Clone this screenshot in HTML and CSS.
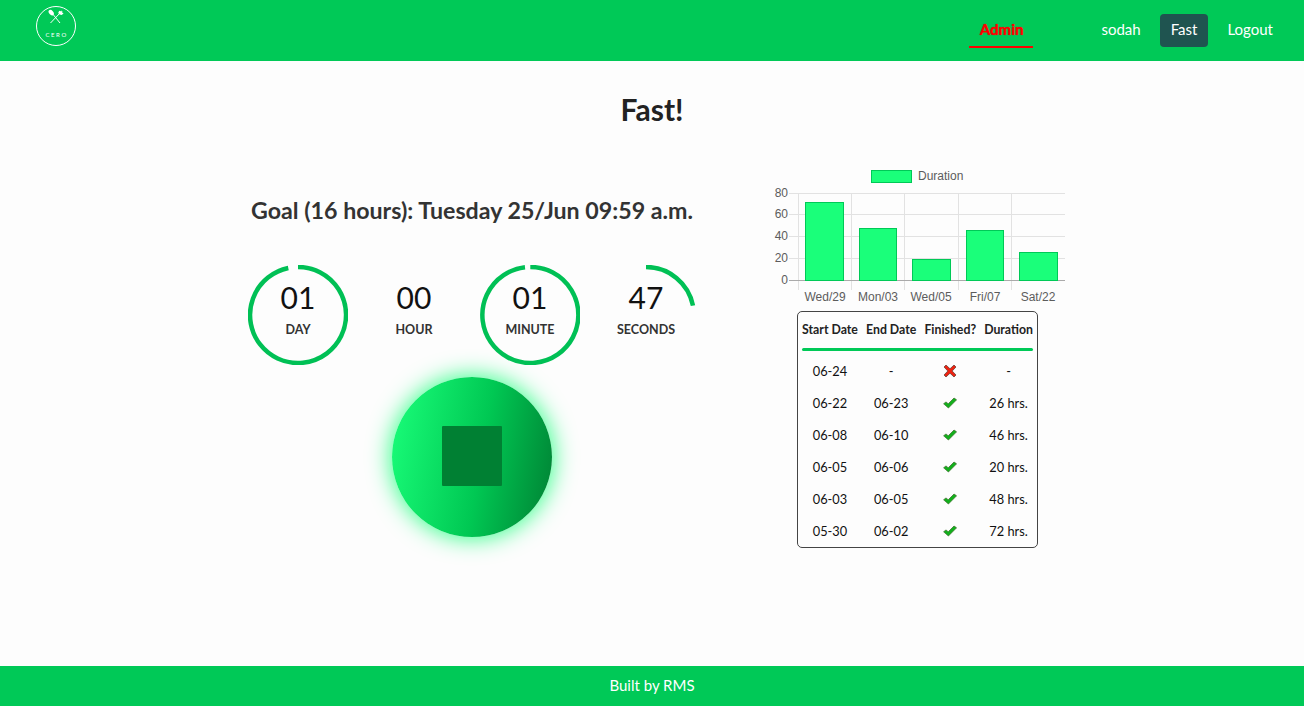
FILE: index.html
```html
<!DOCTYPE html>
<html>
<head>
    <meta charset="UTF-8">
    <title>Fast!</title>
    <link rel="stylesheet" href="styles.css">
</head>
<body>
<header class="topbar">
    <a class="logo" href="#">
        <svg width="42" height="42" viewBox="0 0 42 42">
            <circle cx="21" cy="21" r="19.5" fill="none" stroke="#fff" stroke-width="1"/>
            <path d="M16.5 7.5 L25 18" stroke="#fff" stroke-width="1" fill="none"/>
            <path d="M25.5 7.5 L15.5 18" stroke="#fff" stroke-width="1" fill="none"/>
            <ellipse cx="16.2" cy="7.6" rx="2.1" ry="3.1" fill="#fff" transform="rotate(-42 16.2 7.6)"/>
            <path d="M24.2 5.8 L23.2 8 L24.6 9.6 L26.6 10 L28.6 8.4 L27 7.6 L28 6.8 L26.6 6.6 L26.8 5.4 L25.6 6.2 Z" fill="#fff"/>
            <text class="logo-text" x="21.6" y="31.5" text-anchor="middle">CERO</text>
        </svg>
    </a>
    <nav class="nav">
        <a class="nav-link nav-admin" href="#">Admin</a>
        <a class="nav-link" href="#">sodah</a>
        <a class="nav-link nav-active" href="#">Fast</a>
        <a class="nav-link nav-logout" href="#">Logout</a>
    </nav>
</header>

<main class="content">
    <h1 class="page-title">Fast!</h1>
    <div class="fast-row">
        <section class="timer">
            <h2 class="goal">Goal (16 hours): Tuesday 25/Jun 09:59 a.m.</h2>
            <div class="countdown">
                <div class="unit">
                    <svg class="ring" width="100" height="100" viewBox="0 0 100 100">
                        <path d="M50 2 A48 48 0 1 1 40.3 3" />
                    </svg>
                    <span class="num">01</span>
                    <span class="label">DAY</span>
                </div>
                <div class="unit">
                    <span class="num">00</span>
                    <span class="label">HOUR</span>
                </div>
                <div class="unit">
                    <svg class="ring" width="100" height="100" viewBox="0 0 100 100">
                        <path d="M50.3 2 A48 48 0 1 1 45 2.3" />
                    </svg>
                    <span class="num">01</span>
                    <span class="label">MINUTE</span>
                </div>
                <div class="unit">
                    <svg class="ring" width="100" height="100" viewBox="0 0 100 100">
                        <path d="M50 2 A48 48 0 0 1 97 40.6" />
                    </svg>
                    <span class="num">47</span>
                    <span class="label">SECONDS</span>
                </div>
            </div>
            <button class="stop-btn" type="button"><span class="stop-square"></span></button>
        </section>

        <section class="stats">
            <svg class="chart" width="310" height="148" viewBox="0 0 310 148">
                <rect class="bar" x="111.5" y="10.5" width="40" height="12"/>
                <text class="chart-text" x="158" y="20">Duration</text>
                <g class="grid">
                    <path d="M38.5 33V130M91.5 33V130M144.5 33V130M198.5 33V130M251.5 33V130"/>
                    <path d="M29 33.5H305M29 54.5H305M29 76.5H305M29 98.5H305"/>
                </g>
                <path class="axis" d="M29 120.5H305"/>
                <text class="chart-text" x="28" y="37" text-anchor="end">80</text>
                <text class="chart-text" x="28" y="58" text-anchor="end">60</text>
                <text class="chart-text" x="28" y="80" text-anchor="end">40</text>
                <text class="chart-text" x="28" y="102" text-anchor="end">20</text>
                <text class="chart-text" x="28" y="124" text-anchor="end">0</text>
                <rect class="bar" x="45.5" y="42.5" width="38" height="78"/>
                <rect class="bar" x="99.5" y="68.5" width="37" height="52"/>
                <rect class="bar" x="152.5" y="99.5" width="38" height="21"/>
                <rect class="bar" x="206.5" y="70.5" width="37" height="50"/>
                <rect class="bar" x="259.5" y="92.5" width="38" height="28"/>
                <text class="chart-text" x="65" y="141" text-anchor="middle">Wed/29</text>
                <text class="chart-text" x="118" y="141" text-anchor="middle">Mon/03</text>
                <text class="chart-text" x="171" y="141" text-anchor="middle">Wed/05</text>
                <text class="chart-text" x="225" y="141" text-anchor="middle">Fri/07</text>
                <text class="chart-text" x="278" y="141" text-anchor="middle">Sat/22</text>
            </svg>
            <svg width="0" height="0" class="defs">
                <defs>
                    <symbol id="ok" viewBox="0 0 14 12">
                        <path d="M0.6 6.8 L3 4.9 L5.2 6.8 L11 1 L13.6 2.8 L5.4 11 Z" fill="#12b01c" stroke="#3c6b2a" stroke-width=".7"/>
                    </symbol>
                    <symbol id="no" viewBox="0 0 14 14">
                        <path d="M1 3 L3 1 L7 4.8 L11 1 L13 3 L9.2 7 L13 11 L11 13 L7 9.2 L3 13 L1 11 L4.8 7 Z" fill="#ee2211" stroke="#5a3a30" stroke-width=".7"/>
                    </symbol>
                </defs>
            </svg>
            <table class="history">
                <thead>
                    <tr><th>Start Date</th><th>End Date</th><th>Finished?</th><th>Duration</th></tr>
                    <tr class="rule-row"><td colspan="4"><div class="rule"></div></td></tr>
                </thead>
                <tbody>
                    <tr><td>06-24</td><td>-</td><td><svg class="mark" width="14" height="14"><use href="#no"/></svg></td><td>-</td></tr>
                    <tr><td>06-22</td><td>06-23</td><td><svg class="mark" width="14" height="12"><use href="#ok"/></svg></td><td>26 hrs.</td></tr>
                    <tr><td>06-08</td><td>06-10</td><td><svg class="mark" width="14" height="12"><use href="#ok"/></svg></td><td>46 hrs.</td></tr>
                    <tr><td>06-05</td><td>06-06</td><td><svg class="mark" width="14" height="12"><use href="#ok"/></svg></td><td>20 hrs.</td></tr>
                    <tr><td>06-03</td><td>06-05</td><td><svg class="mark" width="14" height="12"><use href="#ok"/></svg></td><td>48 hrs.</td></tr>
                    <tr><td>05-30</td><td>06-02</td><td><svg class="mark" width="14" height="12"><use href="#ok"/></svg></td><td>72 hrs.</td></tr>
                </tbody>
            </table>
        </section>
    </div>
</main>

<footer class="footer">Built by RMS</footer>
</body>
</html>
```

FILE: styles.css
```css
* {
    margin: 0;
    padding: 0;
    box-sizing: border-box;
}

body {
    height: 706px;
    display: flex;
    flex-direction: column;
    background-color: #fdfdfd;
    color: #222;
    font-family: Lato, "Liberation Sans", sans-serif;
    overflow: hidden;
}

a {
    text-decoration: none;
    color: inherit;
}

/*top bar*/
.topbar {
    height: 61px;
    flex: none;
    display: flex;
    align-items: flex-start;
    justify-content: space-between;
    background-color: #00c957;
    padding: 5px 20px 0 35px;
}

.logo {
    display: block;
    height: 42px;
}

.logo-text {
    font-family: Lato, sans-serif;
    font-size: 6px;
    letter-spacing: 1.6px;
    fill: #fff;
}

.nav {
    display: flex;
    align-items: flex-start;
    margin-top: 9px;
    color: #fff;
    font-size: 15px;
}

.nav-link {
    display: block;
    height: 33px;
    line-height: 31px;
    padding: 0 11px;
    margin-left: 8px;
    border-radius: 4px;
}

.nav-admin {
    height: 34px;
    color: #f00;
    font-weight: 700;
    padding: 0 10px 0 11px;
    border-radius: 0;
    border-bottom: 2px solid #f00;
    text-shadow: 0 0 1px #f00;
    margin-right: 49px;
}

.nav-active {
    background-color: #1f5450;
}

/*main area*/
.content {
    flex: 1;
}

.page-title {
    text-align: center;
    font-size: 30px;
    font-weight: 700;
    line-height: 36px;
    margin-top: 30px;
}

.fast-row {
    display: flex;
    gap: 52px;
    padding-left: 236px;
    margin-top: 28px;
}

.timer {
    width: 472px;
    padding-top: 40px;
}

.goal {
    text-align: center;
    font-size: 23.2px;
    font-weight: 700;
    line-height: 30px;
    color: #333;
}

.countdown {
    display: flex;
    margin-top: 40px;
    padding-left: 12px;
}

.unit {
    position: relative;
    flex: none;
    width: 100px;
    height: 100px;
    margin-right: 16px;
    display: flex;
    flex-direction: column;
    align-items: center;
}

.ring {
    position: absolute;
    left: 0;
    top: 0;
}

.ring path {
    fill: none;
    stroke: #00c055;
    stroke-width: 4.5;
}

.num {
    font-size: 30px;
    line-height: 36px;
    margin-top: 14px;
    color: #111;
}

.label {
    font-size: 12.5px;
    font-weight: 700;
    line-height: 16px;
    margin-top: 7px;
    color: #333;
}

.stop-btn {
    display: block;
    width: 160px;
    height: 160px;
    margin: 12px auto 0;
    border: none;
    border-radius: 50%;
    background: linear-gradient(100deg, #1aff7a 0%, #00c853 55%, #008033 100%);
    box-shadow: 0 0 25px #1aff7a;
}

.stop-square {
    display: block;
    width: 60px;
    height: 60px;
    margin: 0 auto 2px;
    background-color: #008033;
    border-radius: 1px;
}

/*chart and table*/
.stats {
    width: 310px;
}

.chart {
    display: block;
    margin-top: 5px;
}

.chart-text {
    font-family: "Liberation Sans", Arial, sans-serif;
    font-size: 12px;
    fill: #5c5c5c;
}

.grid path {
    stroke: #e2e2e2;
    stroke-width: 1;
    fill: none;
}

.axis {
    stroke: #aaa;
    stroke-width: 1;
}

.bar {
    fill: #1aff7a;
    stroke: #00c957;
    stroke-width: 1;
}

.defs {
    position: absolute;
}

.history {
    width: 241px;
    height: 237px;
    margin: 3px 0 0 37px;
    border: 1px solid #444;
    border-radius: 5px;
    border-spacing: 0;
    font-size: 12.8px;
    color: #111;
    text-align: center;
}

.history th {
    height: 34px;
    font-size: 12.3px;
    font-weight: 700;
    color: #222;
    padding: 0 4px;
    white-space: nowrap;
}

.history td {
    height: 32px;
    padding: 0 4px;
}

.history .rule-row td {
    height: 9px;
    vertical-align: top;
}

.rule {
    height: 3px;
    margin-top: 2px;
    border-radius: 2px;
    background-color: #00c957;
}

.mark {
    display: block;
    margin: 0 auto;
}

/*footer*/
.footer {
    height: 40px;
    flex: none;
    line-height: 38px;
    text-align: center;
    font-size: 15px;
    color: #fff;
    background-color: #00c957;
}
```
